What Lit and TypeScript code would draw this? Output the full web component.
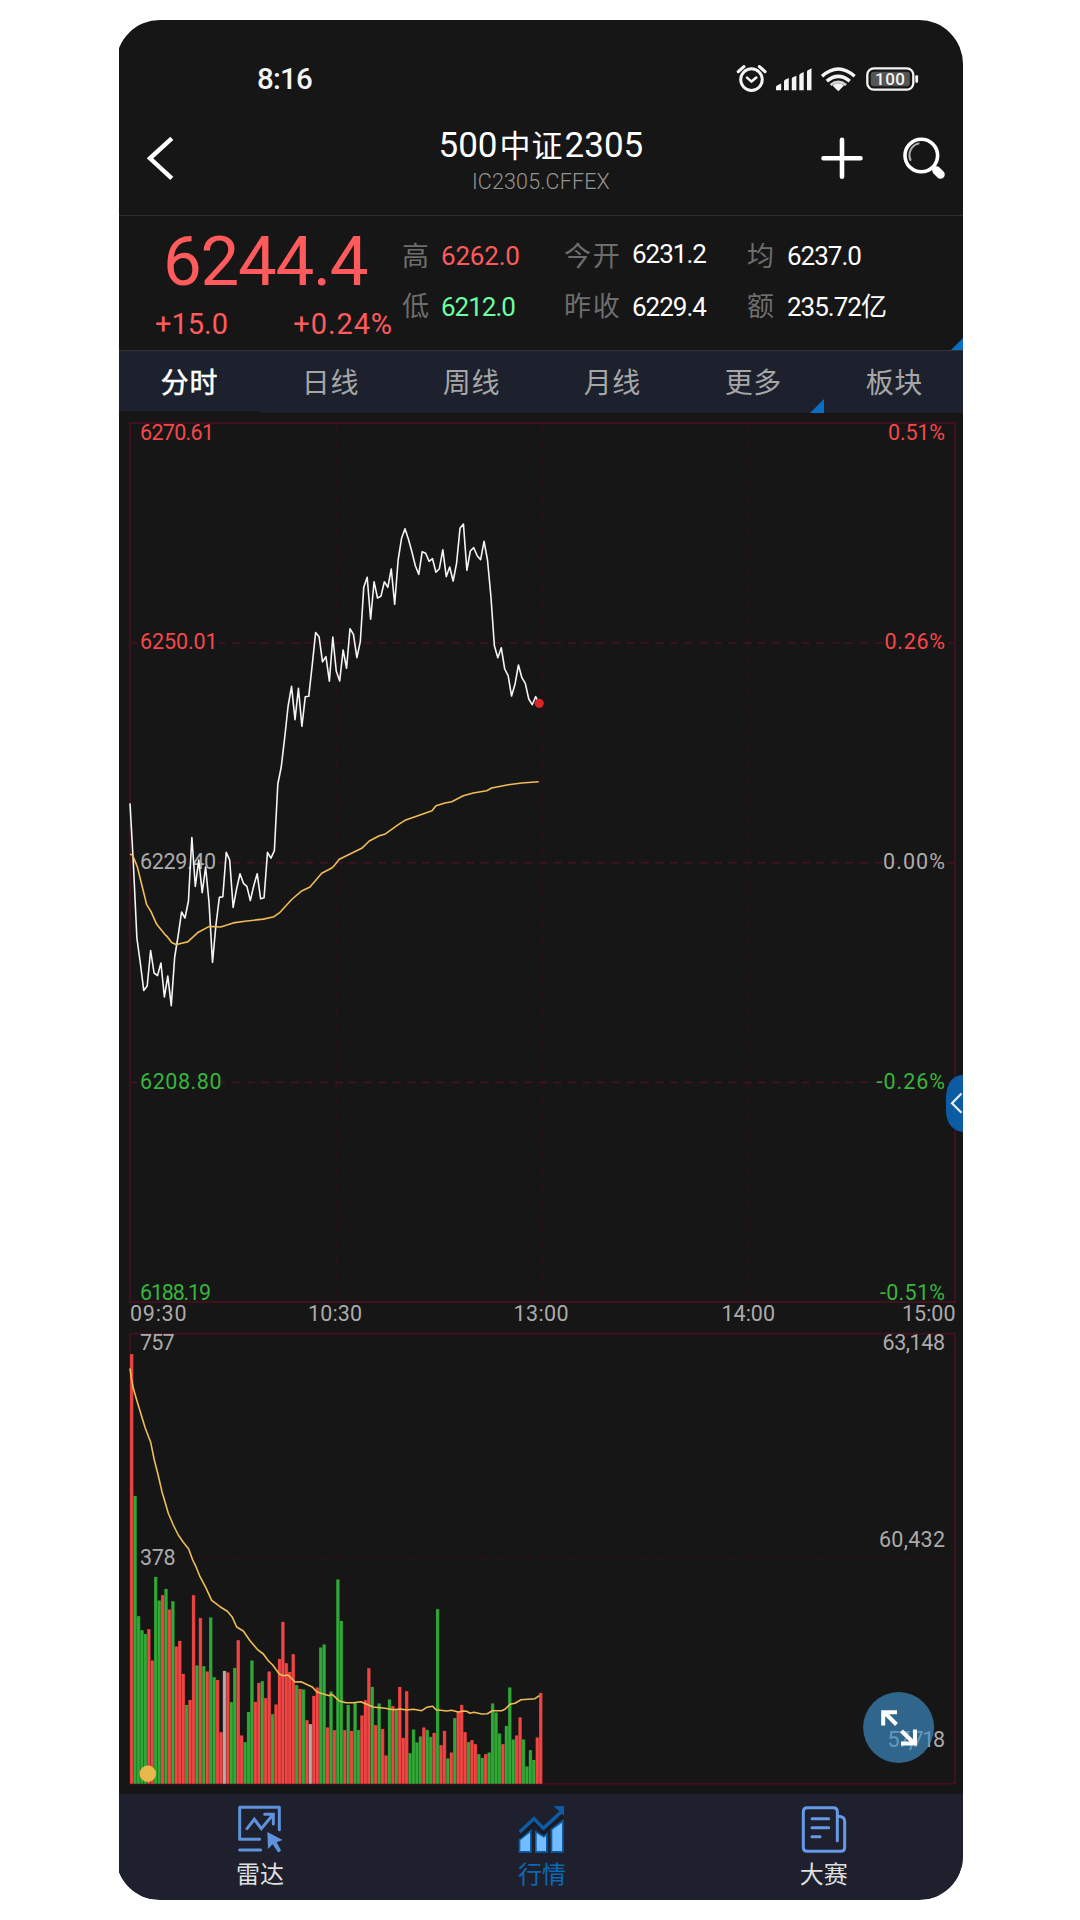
import { LitElement, html, svg, css } from "lit";
import { customElement, property } from "lit/decorators.js";

const MINUTE = 3.4375;
const CHART_LEFT = 130;

const prices = [
  803.4, 865, 938, 963, 990.4, 986, 950.5, 973, 975.6, 963, 997, 976, 1005.6, 957, 936, 912, 918, 901, 837.5, 886.4,
  860, 892.6, 867, 903, 962.5, 925, 897.4, 896.8, 852.3, 860, 907.4, 889, 873.7, 883.3, 886.4, 900.5, 885.7, 873.7,
  898.8, 897.8, 852.3, 858.2, 850.6, 784, 767, 737.6, 706, 686.3, 719.7, 688.4, 726.3, 696.7, 696.3, 665.3, 632.6,
  636.7, 661.9, 656.7, 681.2, 637, 671, 681, 650, 668.3, 628.7, 634.3, 657.7, 641.7, 587.3, 577.3, 619.3, 581.7, 598,
  596.3, 581.7, 587.3, 569, 604.3, 560, 538.3, 528.7, 539.3, 551.7, 565.7, 574.3, 551.7, 553.3, 561.3, 558.7, 572.3,
  568.7, 549.7, 576.7, 567, 581, 563.3, 528.3, 524, 570.3, 551, 547.7, 555.7, 559.7, 541.3, 560, 596.7, 645.7, 657.7,
  647.7, 669, 675.7, 696, 684.3, 665, 677.7, 683.3, 699, 704.7, 696.7, 703.3,
];

const averagePath =
  "130,854 132.7,855.4 137.3,866.8 146.7,904.7 151,911.6 156.7,924.3 165,934.6 167.3,936.7 171.7,942.6 176,944.6 181.7,943.2 187.7,941.9 198.3,932.2 209.3,926.4 220.7,927 233.3,922.9 245,921.2 263.3,919.1 274,916.7 280,912.3 291.7,899.5 301.7,890.9 310,887.1 321.7,873.3 331.3,868.3 333.3,866.7 339.3,859.3 350,854 361.7,848.3 369.3,841 379.3,835.7 384.7,834.3 398.3,824.7 405,820.3 419.3,815.3 432,810.7 436,805.7 445,803 451.7,801.7 463.3,795.7 473.3,793 486.7,790.7 491.7,788 508.3,784.7 521.7,783 538.7,781.7";

const volumes = [
  1288, 863, 502, 460, 449, 463, 369, 620, 549, 565, 584, 522, 547, 411, 428, 329, 236, 251, 565, 354, 497, 352, 336,
  498, 319, 311, 154, 338, 333, 244, 347, 430, 144, 124, 215, 369, 245, 302, 307, 256, 336, 208, 237, 374, 485, 361,
  335, 388, 295, 284, 282, 190, 178, 263, 288, 408, 417, 168, 276, 160, 612, 488, 160, 236, 158, 244, 161, 204, 250,
  346, 290, 175, 240, 164, 84, 252, 232, 223, 290, 137, 277, 91, 162, 123, 141, 168, 161, 140, 152, 523, 115, 158, 75,
  93, 196, 216, 236, 154, 124, 130, 118, 88, 77, 88, 93, 240, 213, 150, 118, 173, 288, 132, 144, 198, 132, 51, 100, 71,
  138, 272,
];
const directions =
  "RGGGGRRGGRGRGRRRGRRGRGRGGRRWRGGRRGGGRRGRRGRRRRRRGRGRWRRGGRGRG" +
  "GRGRGGRRRGRGRRGRGRRRGGGGRGGRGRRGRGRRRGRRGGRGGGGRGGGRRGGGGRR";
const directionFill: Record<string, string> = { R: "#f24543", G: "#30a936", W: "#b0b0b0" };

const positionPoints =
  "130,1368.3 131.3,1378.3 133.3,1388.3 136.7,1400 140.7,1413.3 145.3,1428.3 150.7,1442.3 154.3,1460 157.7,1473.3 162,1491.7 168.3,1513.3 173.3,1525 178.3,1535 183.3,1542.3 188.7,1549 192.7,1560 196,1566.7 200,1576.7 205.7,1587.3 211.7,1600.3 220,1606.7 227.3,1611.3 232,1616.7 236.7,1627 243.3,1631 250,1640.7 257.3,1649.3 263.3,1654 268.3,1660.7 272.7,1665 279.3,1674 283.3,1675.7 288,1675 295,1682 301,1681.7 312.3,1687 316.7,1691.7 321,1693.3 329.3,1695.7 331,1694.5 333.3,1695.3 339.3,1701 346,1702.7 353.3,1702.7 360.7,1701.7 366.7,1704.3 373.3,1707 385,1708.3 393.3,1709.7 400,1709 406.7,1710 413.3,1709.3 421.7,1710.7 426.7,1707.3 432.7,1706.3 436,1709.7 446.7,1711 451.7,1710.3 458.3,1712 463.3,1711 466.7,1711.3 470,1713.3 474,1712.3 481.7,1714 487.3,1713.7 492.3,1710.7 501.7,1710.7 505,1709.3 510,1704.3 515,1703.3 521,1699.7 535,1698.7 539.3,1695.7";

interface AxisLabel {
  text: string;
  x: number;
  end: number;
  y: number;
  tone: "up" | "down" | "flat";
}

const axisLabels: AxisLabel[] = [
  { text: "6270.61", x: 140, end: 214, y: 439.5, tone: "up" },
  { text: "6250.01", x: 140, end: 217.5, y: 649.3, tone: "up" },
  { text: "6229.40", x: 140, end: 216, y: 869.3, tone: "flat" },
  { text: "6208.80", x: 140, end: 221.5, y: 1089, tone: "down" },
  { text: "6188.19", x: 140, end: 211, y: 1300.3, tone: "down" },
  { text: "0.51%", x: 888, end: 945, y: 439.5, tone: "up" },
  { text: "0.26%", x: 884.5, end: 945, y: 649.3, tone: "up" },
  { text: "0.00%", x: 883, end: 945, y: 869.3, tone: "flat" },
  { text: "-0.26%", x: 876.5, end: 945, y: 1089, tone: "down" },
  { text: "-0.51%", x: 880, end: 945, y: 1300.3, tone: "down" },
  { text: "09:30", x: 130, end: 186.5, y: 1321, tone: "flat" },
  { text: "10:30", x: 308, end: 362, y: 1321, tone: "flat" },
  { text: "13:00", x: 513.5, end: 568.5, y: 1321, tone: "flat" },
  { text: "14:00", x: 721.5, end: 775, y: 1321, tone: "flat" },
  { text: "15:00", x: 902, end: 955.5, y: 1321, tone: "flat" },
  { text: "757", x: 140, end: 174.5, y: 1349.8, tone: "flat" },
  { text: "378", x: 140, end: 175.5, y: 1564.5, tone: "flat" },
  { text: "63,148", x: 882.5, end: 945, y: 1349.8, tone: "flat" },
  { text: "60,432", x: 879, end: 945, y: 1547, tone: "flat" },
  { text: "57,718", x: 887.5, end: 945, y: 1746.7, tone: "flat" },
];

@customElement("status-bar")
class StatusBar extends LitElement {
  static styles = css`
    :host {
      display: flex;
      justify-content: space-between;
      align-items: center;
      height: 60px;
      padding: 29px 44px 1px 138px;
      color: #f4f4f4;
    }
    .time {
      font: 500 29.5px/60px Roboto, sans-serif;
      letter-spacing: -0.8px;
    }
    .level {
      font: 500 17px Roboto, sans-serif;
      fill: #f4f4f4;
    }
  `;
  render() {
    return html`
      <span class="time">8:16</span>
      <svg width="184" height="32" viewBox="735 63 184 32" fill="none" stroke="#f4f4f4">
        <circle cx="751.5" cy="79.6" r="10.8" stroke-width="3" />
        <path d="M747 77.6l4.5 4 4.8-4" stroke-width="2.6" stroke-linecap="round" stroke-linejoin="round" />
        <path d="M738.3 71.6l5.6-5M765 71.6l-5.6-5" stroke-width="3.2" stroke-linecap="round" />
        <g fill="#f4f4f4" stroke="none">
          <path
            d="M776 90.3v-3q0-1.5 1.5-2l3.7-1.7v6.7zM784 90.3v-9q0-1 1-1.5l3.8-1.7v12.2zM791.8 90.3v-11.5q0-1 1-1.5l3.6-1.6v14.6zM799.3 90.3v-15q0-1 1-1.5l3.4-1.7v18.2zM807 90.3v-18.7q0-1 1-1.4l3.5-1.9v22z"
          />
          <path d="M838.3 91.2l-5.8-5.7q5.8-4.3 11.6 0z" />
        </g>
        <path d="M822 76.3q16.300-14.600 32.600 0M826.800 81.200q11.500-9.600 23 0" stroke-width="3.5" />
        <path d="M830.500 85q7.800-6.200 15.600 0" stroke-width="2.6" opacity=".85" />
        <rect x="867.3" y="68.3" width="46" height="21.4" rx="6.5" stroke-width="2.3" />
        <rect x="870.8" y="71.8" width="39" height="14.4" rx="3" fill="#555" stroke="none" />
        <rect x="915.3" y="75.3" width="2.8" height="7.4" rx="1" fill="#f4f4f4" stroke="none" />
        <text class="level" x="875" y="85" textLength="30" stroke="none">100</text>
      </svg>
    `;
  }
}

@customElement("title-bar")
class TitleBar extends LitElement {
  static styles = css`
    :host {
      display: grid;
      grid-template-columns: 1fr auto 1fr;
      height: 106px;
      border-bottom: 1px solid #2f2f2f;
      box-sizing: border-box;
      color: #fff;
    }
    .back {
      margin: 24px 0 0 28px;
    }
    .names {
      padding-top: 14px;
      text-align: center;
      white-space: nowrap;
    }
    .title {
      font: 400 35px/40px Roboto, sans-serif;
    }
    .cjk {
      font: 400 31px/40px "Noto Sans CJK SC", sans-serif;
      letter-spacing: 1px;
      margin: 0 1px 0 2px;
    }
    .code {
      font: 300 21.5px/32px Roboto, sans-serif;
      letter-spacing: 0.15px;
      color: #949494;
    }
    .actions {
      display: flex;
      justify-content: flex-end;
      gap: 36px;
      padding: 24px 16px 0 0;
    }
  `;
  render() {
    return html`
      <svg class="back" width="30" height="48" viewBox="147 134 30 48" fill="none" stroke="#fff" stroke-width="4.4">
        <path d="M171.8 138.3L150 158.3l21.800 20" />
      </svg>
      <div class="names">
        <div class="title">500<span class="cjk">中证</span>2305</div>
        <div class="code">IC2305.CFFEX</div>
      </div>
      <div class="actions">
        <svg width="46" height="48" viewBox="819 134 46 48" stroke="#fff" stroke-width="4.6" stroke-linecap="round">
          <path d="M823.5 158.300h37M842 139.800v37" />
        </svg>
        <svg width="46" height="48" viewBox="901 134 46 48" fill="none" stroke="#fff">
          <circle cx="921.3" cy="155.5" r="16.3" stroke-width="3.6" />
          <path d="M910.5 160a12 12 0 0 1 8-16.500" stroke="#aaa" stroke-width="2.2" stroke-linecap="round" />
          <path d="M933 167.500l3 3" stroke-width="5" />
          <path d="M936.500 170.500l4 4" stroke-width="8.5" stroke-linecap="round" />
        </svg>
      </div>
    `;
  }
}

@customElement("quote-panel")
class QuotePanel extends LitElement {
  static styles = css`
    :host {
      position: relative;
      display: grid;
      grid-template-columns: 282px 1fr;
      height: 135px;
      border-bottom: 1px solid #333;
      box-sizing: border-box;
      white-space: nowrap;
    }
    .last {
      padding: 13px 0 0 44px;
      font: 400 69px/66px Roboto, sans-serif;
      letter-spacing: -1.3px;
      color: #ff5a5c;
    }
    .change {
      display: flex;
      justify-content: space-between;
      padding: 0 8px 0 36px;
      margin-top: 14px;
      font: 400 29px/30px Roboto, sans-serif;
      color: #ff5a5c;
    }
    .percent {
      letter-spacing: 0.9px;
    }
    .stats {
      display: grid;
      grid-template-columns: 39px 123px 68px 115px 40px 1fr;
      grid-template-rows: 49px 52px;
      align-items: center;
      padding: 14px 0 0 1px;
      height: 101px;
    }
    .label {
      font: 400 27px/30px "Noto Sans CJK SC", sans-serif;
      letter-spacing: 1.7px;
      color: #6d6d6d;
    }
    .value {
      font: 400 26px/30px Roboto, "Noto Sans CJK SC", sans-serif;
      padding-top: 3px;
      letter-spacing: -1px;
      color: #fff;
    }
    .up {
      color: #ff5a5c;
      letter-spacing: -0.2px;
    }
    .down {
      color: #6dff9f;
    }
    .raised {
      padding-top: 0;
      margin-top: -2px;
    }
    .corner {
      position: absolute;
      right: 0;
      bottom: 0;
    }
  `;
  render() {
    const stats = [
      ["高", "6262.0", "up"],
      ["今开", "6231.2", "raised"],
      ["均", "6237.0", ""],
      ["低", "6212.0", "down"],
      ["昨收", "6229.4", ""],
      ["额", "235.72亿", ""],
    ];
    return html`
      <div>
        <div class="last">6244.4</div>
        <div class="change"><span>+15.0</span><span class="percent">+0.24%</span></div>
      </div>
      <div class="stats">
        ${stats.map(
          ([label, value, tone]) => html`<span class="label">${label}</span><span class="value ${tone}">${value}</span>`
        )}
      </div>
      <svg class="corner" width="12" height="12"><path d="M12 0v12H0z" fill="#0a6fc4" /></svg>
    `;
  }
}

@customElement("period-tabs")
class PeriodTabs extends LitElement {
  static styles = css`
    :host {
      display: grid;
      grid-template-columns: repeat(6, 1fr);
      height: 62px;
      margin-right: -2px;
      background: #1c212d;
    }
    .tab {
      position: relative;
      font: 400 28px/60px "Noto Sans CJK SC", sans-serif;
      letter-spacing: 0.6px;
      text-align: center;
      color: #a6a6a6;
    }
    .active {
      color: #fff;
      -webkit-text-stroke: 0.5px #fff;
      border-bottom: 2px solid #161616;
      box-sizing: border-box;
    }
    .corner {
      position: absolute;
      right: 0;
      bottom: 0;
    }
  `;
  render() {
    return html`${["分时", "日线", "周线", "月线", "更多", "板块"].map(
      (name, i) => html`<div class="tab ${i === 0 ? "active" : ""}">
        ${name}${i === 4
          ? html`<svg class="corner" width="14" height="14"><path d="M14 0v14H0z" fill="#0a6fc4" /></svg>`
          : ""}
      </div>`
    )}`;
  }
}

@customElement("trend-chart")
class TrendChart extends LitElement {
  static styles = css`
    :host {
      display: block;
      height: 1381px;
    }
    .canvas {
      display: block;
    }
    .axis {
      font: 400 21.5px Roboto, sans-serif;
    }
    .up {
      fill: #f5484a;
    }
    .down {
      fill: #37b53c;
    }
    .flat {
      fill: #ababab;
    }
    .frame {
      fill: none;
      stroke: #44101f;
      stroke-width: 1.8;
    }
    .grid {
      stroke: #4a1022;
      stroke-width: 1.6;
      stroke-dasharray: 8 6.6;
    }
    .faint {
      stroke: #2a1219;
    }
    .price {
      fill: none;
      stroke: #f5f5f5;
      stroke-width: 1.6;
      stroke-linejoin: round;
    }
    .average {
      fill: none;
      stroke: #eebd55;
      stroke-width: 1.6;
      stroke-linejoin: round;
    }
  `;
  render() {
    const pricePoints = prices.map((y, i) => `${CHART_LEFT + i * MINUTE},${y}`).join(" ");
    return html`<svg class="canvas" width="844" height="1381" viewBox="119 413 844 1381">
      ${[336.3, 542.5, 748.5].map(
        (x) => svg`<line class="grid faint" x1=${x} x2=${x} y1="424" y2="1302" /><line class="grid faint" x1=${x} x2=${x} y1="1334" y2="1783" stroke-opacity=".3" />`
      )}
      ${[643, 862.7, 1082.5].map((y) => svg`<line class="grid" x1="130" x2="955" y1=${y} y2=${y} />`)}
      <line class="grid faint" x1="130" x2="955" y1="1558.5" y2="1558.5" />
      <rect class="frame" x="130" y="423" width="825" height="879" />
      <rect class="frame" x="130" y="1333.7" width="825" height="450" />
      ${[643, 862.7, 1082.5].map((y) => svg`<rect x="138" y=${y - 2} width="80" height="4" fill="#161616" />`)}
      ${axisLabels.map(
        (l) => svg`<text class="axis ${l.tone}" x=${l.x} y=${l.y} textLength=${l.end - l.x}>${l.text}</text>`
      )}
      <polyline class="price" points=${pricePoints} />
      <polyline class="average" points=${averagePath} />
      <circle cx="539.2" cy="703.3" r="4.6" fill="#dd2428" />
      ${volumes.map((v, i) => {
        const fill = directionFill[directions[i]];
        const x = CHART_LEFT + i * MINUTE;
        const h = v / 3;
        return svg`<rect x=${x} y=${1783.6 - h} width=${MINUTE} height=${h} fill=${fill} opacity=".72" /><rect x=${x + 0.3} y=${1783.6 - h} width="2.5" height=${h} fill=${fill} />`;
      })}
      <polyline class="average" points=${positionPoints} />
      <circle cx="147.8" cy="1773.7" r="8.2" fill="#e9b84c" />
      <circle cx="898.6" cy="1727.5" r="35.5" fill="#3e90c8" fill-opacity=".66" />
      <path
        d="M896.500 1724.500l-12.500-12.500M883.200 1725.500v-13.300h13.800M901.500 1731l13 12.500M915 1729.500v14h-14"
        fill="none"
        stroke="#fff"
        stroke-width="4"
      />
      <path d="M963 1075q-9 0-13.500 8t-3.500 21q-1 13 3.500 20t13.500 8z" fill="#0b5ca3" />
      <path d="M961.500 1093.500l-9.500 9.700 9.500 9.500" fill="none" stroke="#e8eef5" stroke-width="2.2" />
    </svg>`;
  }
}

@customElement("bottom-nav")
class BottomNav extends LitElement {
  @property({ type: String }) current = "行情";
  static styles = css`
    :host {
      display: grid;
      grid-template-columns: repeat(3, 1fr);
      height: 105px;
      margin-right: -2px;
      background: #1e212d;
    }
    .item {
      display: flex;
      flex-direction: column;
      align-items: center;
      padding-top: 11px;
      font: 400 24px/36px "Noto Sans CJK SC", sans-serif;
      color: #dedede;
    }
    .icon {
      margin-bottom: 2px;
    }
    .current {
      color: #0d68b4;
    }
  `;
  render() {
    const radar = html`<svg class="icon" width="46" height="48" viewBox="380 76 138 144" fill="none" stroke="#5f92dc" stroke-width="9">
      <path d="M448 178.500h-60V82.500h119v68M388 211h63" stroke-linecap="round" stroke-linejoin="round" />
      <path d="M410 147l22-28 21 28 34-41M463 104h26v29" stroke-linecap="round" />
      <path d="M471 157l46 24-18 7 13 24q-5 9-10 4l-15-22-14 14z" fill="#5f92dc" stroke="none" />
    </svg>`;
    const market = html`<svg class="icon" width="48" height="48" viewBox="42 31 144 144">
      <g fill="#72bdff" stroke="#0d5ca8" stroke-width="5">
        <path d="M46.500 171.500v-36l34-27v63zM95.500 171.500V111l24 15 9-8v53.500zM142.500 171.500V104l34-25v92.500z" />
      </g>
      <path d="M47 112l43-40 28 29 54-50" fill="none" stroke="#0d5ca8" stroke-width="10" />
      <path d="M149 34h31v29z" fill="#0d5ca8" />
      <path d="M48 128l42-42 29 29 59-52" fill="none" stroke="#161b26" stroke-width="8" />
    </svg>`;
    const contest = html`<svg class="icon" width="46" height="48" viewBox="784 435 138 144" fill="none" stroke="#6699e6" stroke-width="9" stroke-linecap="round">
      <path d="M893 542V455q0-12-12-12h-78q-12 0-12 12v107q0 12 12 12h100q12 0 12-12v-78q0-14-20-15" />
      <path d="M817 476h50M817 503h50M817 530h24" />
    </svg>`;
    const items = [
      { name: "雷达", icon: radar },
      { name: "行情", icon: market },
      { name: "大赛", icon: contest },
    ];
    return html`${items.map(
      (it) => html`<div class="item ${it.name === this.current ? "current" : ""}">${it.icon}<span>${it.name}</span></div>`
    )}`;
  }
}

@customElement("app-root")
class AppRoot extends LitElement {
  static styles = css`
    :host {
      display: block;
      height: 1920px;
      background: #fff;
      overflow: hidden;
    }
    .clip {
      width: 843.5px;
      margin: 20px 0 0 119.3px;
      overflow: hidden;
    }
    .phone {
      display: flex;
      flex-direction: column;
      height: 1880px;
      margin-left: -3px;
      padding-left: 2.7px;
      border-radius: 44px;
      overflow: hidden;
      background: linear-gradient(#161616 0 1774px, #1e212d 1774px);
    }
  `;
  render() {
    return html`<div class="clip">
      <div class="phone">
        <status-bar></status-bar>
        <title-bar></title-bar>
        <quote-panel></quote-panel>
        <period-tabs></period-tabs>
        <trend-chart></trend-chart>
        <bottom-nav></bottom-nav>
      </div>
    </div>`;
  }
}
